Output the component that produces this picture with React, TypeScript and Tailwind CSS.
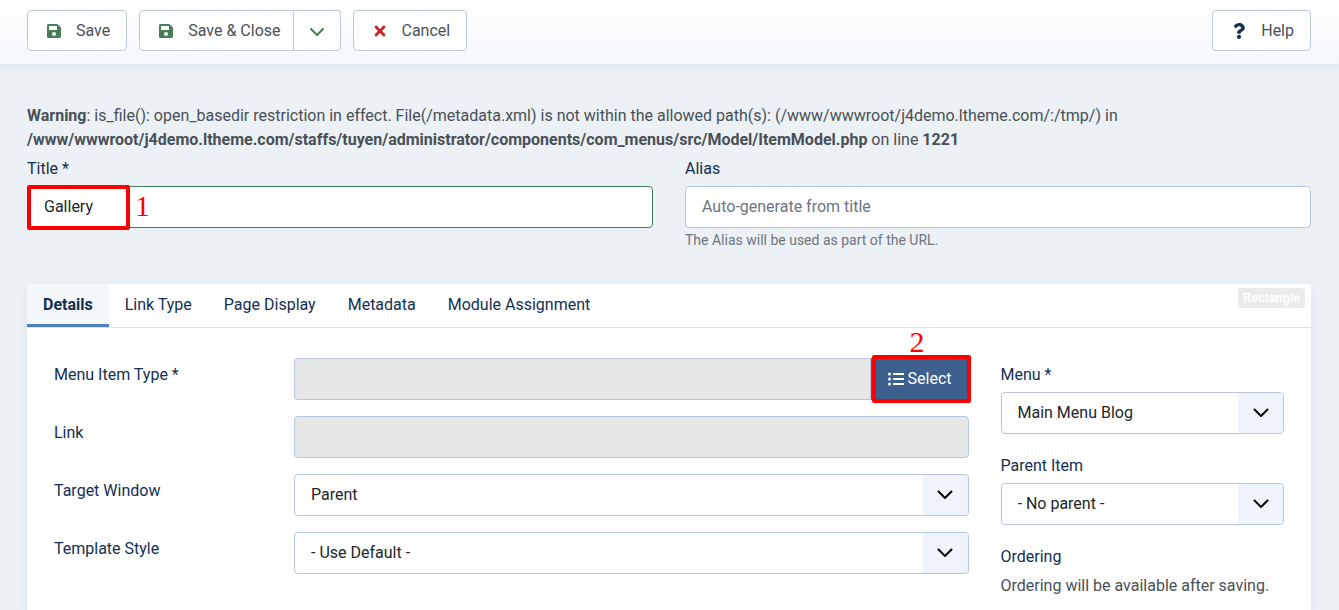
import type { ReactNode } from "react";
import { FaListUl, FaQuestion, FaSave, FaTimes } from "react-icons/fa";
import { FaChevronDown } from "react-icons/fa6";

type FieldProps = {
  id: string;
  label: string;
  children: ReactNode;
};

type SelectProps = {
  id: string;
  options: string[];
};

const tabs = ["Details", "Link Type", "Page Display", "Metadata", "Module Assignment"];

const toolbarButton =
  "flex h-[41px] items-center gap-3.5 border border-[#bfc8d6] bg-white pl-[18px] text-[#495057]";

function SelectBox({ id, options }: SelectProps) {
  return (
    <div className="grid h-[42px] w-full">
      <select
        id={id}
        className="col-start-1 row-start-1 w-full appearance-none rounded border border-[#b5c6df] bg-white pl-4 pr-12 text-[#22262a]"
      >
        {options.map((option) => (
          <option key={option}>{option}</option>
        ))}
      </select>
      <span className="pointer-events-none col-start-1 row-start-1 my-px mr-px flex w-[45px] items-center justify-center justify-self-end rounded-r-[3px] bg-[#eff3fb]">
        <svg width="16" height="10" viewBox="0 0 16 10" fill="none" stroke="#000" strokeWidth="2">
          <path d="M1.5 1.5 8 8l6.5-6.5" strokeLinecap="round" strokeLinejoin="round" />
        </svg>
      </span>
    </div>
  );
}

// label on the left, control on the right
function FieldRow({ id, label, children }: FieldProps) {
  return (
    <div className="flex items-start">
      <label htmlFor={id} className="w-60 shrink-0 pt-[5px]">{label}</label>
      <div className="flex h-[42px] min-w-0 flex-1">{children}</div>
    </div>
  );
}

function SideField({ id, label, children }: FieldProps) {
  return (
    <div className="flex flex-col gap-[5px]">
      <label htmlFor={id}>{label}</label>
      {children}
    </div>
  );
}

export default function App() {
  return (
    <div className="flex min-h-screen flex-col bg-[#ecf1f5] font-['Roboto',sans-serif] text-base text-[#132f53]">
      <header className="flex items-center gap-3 bg-linear-to-b from-white to-[#f4f7fc] pb-[13px] pl-[27px] pr-7 pt-2.5 shadow-[0_3px_10px_rgba(200,215,235,0.5)]">
        <button type="button" className={`${toolbarButton} rounded pr-4`}>
          <FaSave className="text-[#457d54]" />
          Save
        </button>
        <div className="flex">
          <button type="button" className={`${toolbarButton} rounded-l pr-3`}>
            <FaSave className="text-[#457d54]" />
            Save &amp; Close
          </button>
          <button
            type="button"
            aria-label="More save options"
            className="flex h-[41px] w-[47px] items-center justify-center rounded-r border border-l-0 border-[#bfc8d6] bg-white text-[#457d54]"
          >
            <FaChevronDown />
          </button>
        </div>
        <button type="button" className={`${toolbarButton} rounded pr-4`}>
          <FaTimes className="text-[#c52827]" />
          Cancel
        </button>
        <button type="button" className={`${toolbarButton} ml-auto rounded pr-4`}>
          <FaQuestion className="text-[#132f53]" />
          Help
        </button>
      </header>

      <main className="flex flex-1 flex-col pl-[27px] pr-7 pt-10">
        <p className="text-[#495057]">
          <b>Warning</b>: is_file(): open_basedir restriction in effect. File(/metadata.xml) is not within the
          allowed path(s): (/www/wwwroot/j4demo.ltheme.com/:/tmp/) in
          <br />
          <b>/www/wwwroot/j4demo.ltheme.com/staffs/tuyen/administrator/components/com_menus/src/Model/ItemModel.php</b>
          {" "}on line <b>1221</b>
        </p>

        <div className="grid grid-cols-2 gap-8 pt-[5px]">
          <div className="flex flex-col gap-[5px]">
            <label htmlFor="title">Title *</label>
            <div className="relative">
              <input
                id="title"
                defaultValue="Gallery"
                className="h-[42px] w-full rounded border border-[#457d54] bg-white px-4 pb-0.5 text-[#22262a]"
              />
              <div className="pointer-events-none absolute -top-px left-0 h-[45px] w-[103px] rounded-xs border-4 border-[#ff0000]" />
              <span className="pointer-events-none absolute left-27 top-1 font-['Liberation_Serif',serif] text-[30px] leading-8 text-[#ff0000]">
                1
              </span>
            </div>
          </div>
          <div className="flex flex-col">
            <label htmlFor="alias" className="mb-[5px]">Alias</label>
            <input
              id="alias"
              placeholder="Auto-generate from title"
              className="h-[42px] w-full rounded border border-[#b5c6df] bg-white px-4 pb-0.5 placeholder:text-[#6d757e]"
            />
            <p className="mt-0.5 text-sm text-[#6d757e]">The Alias will be used as part of the URL.</p>
          </div>
        </div>

        <section className="mt-[34px] flex-1 rounded-t bg-white shadow-[0_3px_10px_rgba(190,205,235,0.35)]">
          <div className="relative flex border-b border-[#d8e1ec]">
            {tabs.map((tab, i) => (
              <button
                key={tab}
                type="button"
                className={
                  i === 0
                    ? "h-[43px] border-b-3 border-[#4d7fc3] bg-[#f3f7fa] px-4 pt-0.5 font-bold"
                    : "h-[43px] border-b-3 border-transparent px-4 pt-0.5"
                }
              >
                {tab}
              </button>
            ))}
            <span className="absolute right-1.5 top-1 rounded-xs bg-[#ebebeb] px-[5px] font-['Liberation_Sans',sans-serif] text-xs font-bold leading-5 text-white">
              Rectangle
            </span>
          </div>

          <div className="grid grid-cols-4 gap-x-8 px-[27px] pb-2 pt-[30px]">
            <div className="col-span-3 flex flex-col gap-4">
              <FieldRow id="item-type" label="Menu Item Type *">
                <div className="relative flex w-full">
                  <input
                    id="item-type"
                    readOnly
                    className="min-w-0 flex-1 rounded-l border border-[#b5c6df] bg-[#e7e7e7] px-4"
                  />
                  <button
                    type="button"
                    className="flex w-[98px] items-center justify-center gap-1 rounded-r bg-[#3c5f8e] text-white"
                  >
                    <FaListUl />
                    Select
                  </button>
                  <div className="pointer-events-none absolute -right-0.5 -top-[3px] h-12 w-[99px] rounded-xs border-4 border-[#ff0000]" />
                  <span className="pointer-events-none absolute -top-8 right-11 font-['Liberation_Serif',serif] text-[30px] leading-8 text-[#ff0000]">
                    2
                  </span>
                </div>
              </FieldRow>
              <FieldRow id="link" label="Link">
                <input
                  id="link"
                  readOnly
                  className="w-full rounded border border-[#b5c6df] bg-[#e7e7e7] px-4"
                />
              </FieldRow>
              <FieldRow id="target" label="Target Window">
                <SelectBox id="target" options={["Parent"]} />
              </FieldRow>
              <FieldRow id="template" label="Template Style">
                <SelectBox id="template" options={["- Use Default -"]} />
              </FieldRow>
            </div>

            <div className="flex flex-col gap-5 pt-[5px]">
              <SideField id="menu" label="Menu *">
                <SelectBox id="menu" options={["Main Menu Blog"]} />
              </SideField>
              <SideField id="parent" label="Parent Item">
                <SelectBox id="parent" options={["- No parent -"]} />
              </SideField>
              <div className="flex flex-col gap-[5px]">
                <span>Ordering</span>
                <span className="text-[#495057]">Ordering will be available after saving.</span>
              </div>
            </div>
          </div>
        </section>
      </main>
    </div>
  );
}
